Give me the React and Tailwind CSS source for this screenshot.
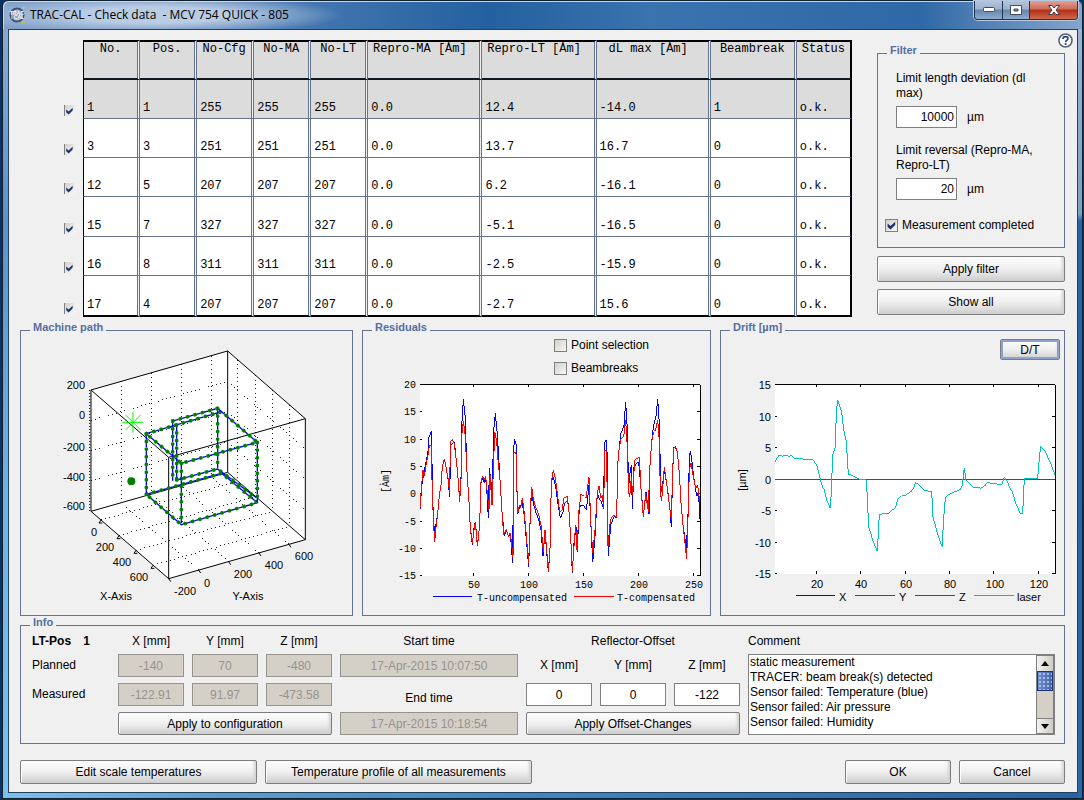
import React from "react";

const columns = [
  { name: "No.", width: 57 },
  { name: "Pos.", width: 57 },
  { name: "No-Cfg", width: 57 },
  { name: "No-MA", width: 57 },
  { name: "No-LT", width: 57 },
  { name: "Repro-MA [Àm]", width: 114, wide: true },
  { name: "Repro-LT [Àm]", width: 114, wide: true },
  { name: "dL max [Àm]", width: 114, wide: true },
  { name: "Beambreak", width: 86 },
  { name: "Status", width: 55 },
];

const rows = [
  ["1", "1", "255", "255", "255", "0.0", "12.4", "-14.0", "1", "o.k."],
  ["3", "3", "251", "251", "251", "0.0", "13.7", "16.7", "0", "o.k."],
  ["12", "5", "207", "207", "207", "0.0", "6.2", "-16.1", "0", "o.k."],
  ["15", "7", "327", "327", "327", "0.0", "-5.1", "-16.5", "0", "o.k."],
  ["16", "8", "311", "311", "311", "0.0", "-2.5", "-15.9", "0", "o.k."],
  ["17", "4", "207", "207", "207", "0.0", "-2.7", "15.6", "0", "o.k."],
];

function Button({ className = "", children }) {
  return (
    <button
      type="button"
      className={
        "rounded-xs border border-[#7d7d7d] bg-[linear-gradient(to_bottom,#fdfdfd,#f1f1f1_45%,#e6e6e6_65%,#cdcdcd)] text-center text-xs text-black shadow-[inset_-3px_0_3px_-1px_#d2d2d2,inset_1px_1px_0_#ffffff] " +
        className
      }
    >
      {children}
    </button>
  );
}

function CheckMark({ className }) {
  return (
    <svg viewBox="0 0 13 13" className={"pointer-events-none [grid-area:1/1] " + className}>
      <path d="M2.6 4.6 L5.5 7 L10.2 2.8 V6 L5.5 10.6 L2.6 8 Z" fill="#1c3476" />
    </svg>
  );
}

function Checkbox({ id, checked }) {
  return (
    <span className="grid size-[13px] shrink-0">
      <input
        id={id}
        type="checkbox"
        defaultChecked={checked}
        className="peer size-[13px] appearance-none border border-[#808080] bg-[linear-gradient(135deg,#d4d0c8,#f8f8f6)] [grid-area:1/1]"
      />
      <CheckMark className="hidden size-[13px] peer-checked:block" />
    </span>
  );
}

function RowCheckbox({ label }) {
  return (
    <span className="grid h-[11px] w-[10px]">
      <input
        type="checkbox"
        defaultChecked
        aria-label={label}
        className="peer h-[11px] w-[10px] appearance-none border-l border-[#808080] bg-[linear-gradient(135deg,#d4d0c8,#f8f8f6)] [grid-area:1/1]"
      />
      <CheckMark className="hidden h-[12px] w-[11px] peer-checked:block" />
    </span>
  );
}

function Panel({ title, children }) {
  return (
    <fieldset className="min-w-0 border border-[#66738e]">
      <legend className="ml-[9px] px-[3px] pb-[6px] text-[11px] leading-[12px] font-bold text-[#566ea2]">
        {title}
      </legend>
      {children}
    </fieldset>
  );
}

function MeasurementTable() {
  return (
    <table className="h-[277px] w-full table-fixed border-separate border-spacing-0 bg-[#f0f0f0] font-['Liberation_Mono',monospace] text-xs leading-[14px]">
      <colgroup>
        <col width={20} />
        {columns.map((c) => (
          <col key={c.name} width={c.width} />
        ))}
      </colgroup>
      <thead>
        <tr className="h-[40px]">
          <td />
          {columns.map((c) => (
            <th
              key={c.name}
              scope="col"
              className={
                "overflow-hidden border-t-2 border-r-3 border-b-2 border-t-black border-r-[#66738e] border-b-[#101820] bg-[#dcdcdc] bg-clip-padding p-0 align-top font-normal whitespace-nowrap [border-right-style:double] first-of-type:border-l first-of-type:border-l-black last:border-r-2 last:border-r-black last:[border-right-style:solid] " +
                (c.wide ? "pr-2" : "")
              }
            >
              {c.name}
            </th>
          ))}
        </tr>
      </thead>
      <tbody>
        {rows.map((row, i) => (
          <tr key={row[0]} className="group">
            <td className="p-0 pb-[3px] pl-px align-bottom">
              <RowCheckbox label={"Use measurement " + row[0]} />
            </td>
            {row.map((value, j) => (
              <td
                key={j}
                className={
                  "border-r-3 border-b border-r-[#66738e] border-b-[#66738e] bg-clip-padding p-0 pb-[3px] pl-[3px] align-bottom [border-right-style:double] nth-2:border-l nth-2:border-l-black last:border-r-2 last:border-r-black last:[border-right-style:solid] group-last:border-b-2 group-last:border-b-black " +
                  (i === 0 ? "bg-[#dcdcdc]" : "bg-white")
                }
              >
                {value}
              </td>
            ))}
          </tr>
        ))}
      </tbody>
    </table>
  );
}

const boxX = [0.13, 0.36, 0.58, 0.8];
const boxY = [0.22, 0.44, 0.66, 0.88];
const boxZ = [91, 182, 273];

const toolPath = [
  "394,341 620,275 727,367 499,430 394,341",
  "394,523 620,460 727,548 499,614 394,523",
  "394,341 394,523",
  "499,430 499,614",
  "727,367 727,548",
  "608,265 608,447",
  "473,303 473,487",
  "485,315 485,480",
  "473,303 608,265 620,275",
  "485,480 608,447 727,535",
];

function MachinePath() {
  const grid = [];
  boxY.forEach((t) => {
    const dx = 410 * t;
    const dy = -117 * t;
    grid.push([228 + dx, 210 + dy, 228 + dx, 574 + dy]);
    grid.push([461 + dx, 776 + dy, 228 + dx, 574 + dy]);
  });
  boxX.forEach((t) => {
    const dx = 233 * t;
    const dy = 202 * t;
    grid.push([638 + dx, 93 + dy, 638 + dx, 457 + dy]);
    grid.push([228 + dx, 574 + dy, 638 + dx, 457 + dy]);
  });
  boxZ.forEach((z) => {
    grid.push([228, 210 + z, 638, 93 + z]);
    grid.push([638, 93 + z, 871, 296 + z]);
  });
  return (
    <svg
      viewBox="21 339 331 276"
      className="block h-auto w-full font-['Liberation_Sans',Arial,sans-serif] text-[11px]"
      role="img"
      aria-label="Machine path"
    >
      <g transform="translate(15 320) scale(0.33333)" fill="none" strokeWidth="3">
        <path d="M228 210 L638 93 L871 296 V659 L461 776 L228 574 Z" fill="#fff" />
        <g stroke="#222" strokeDasharray="3 10" shapeRendering="crispEdges">
          {grid.map(([x1, y1, x2, y2], i) => (
            <line key={i} x1={x1} y1={y1} x2={x2} y2={y2} />
          ))}
        </g>
        <path
          d="M228 210 L638 93 L871 296 L461 412 Z M228 574 L638 457 L871 659 L461 776 Z M228 210 V574 M638 93 V457 M871 296 V659 M461 412 V776"
          stroke="#000"
        />
        <path
          d="M258 600 l-6 9 h10 M312 647 l-6 9 h10 M363 691 l-6 9 h10 M414 736 l-6 9 h10 M461 776 l6 9 M551 750 l6 9 M641 725 l6 9 M732 699 l6 9 M822 673 l6 9"
          stroke="#000"
        />
        <path d="M224 210 V574" stroke="#000" strokeDasharray="3 6" />
        {toolPath.map((p) => (
          <React.Fragment key={p}>
            <polyline points={p} stroke="#0000ff" strokeWidth="4" strokeDasharray="13 10" strokeDashoffset="-5" />
            <polyline points={p} stroke="#007f00" strokeWidth="11" strokeLinecap="round" strokeDasharray="1 22" />
          </React.Fragment>
        ))}
        <path d="M322 307 H384 M354 276 V338 M332 285 L377 330 M377 285 L332 330" stroke="#00ff00" />
        <circle cx="349" cy="484" r="12" fill="#007f00" />
      </g>
      <g textAnchor="end">
        <text x="85" y="389">200</text>
        <text x="85" y="419">0</text>
        <text x="85" y="451">-200</text>
        <text x="85" y="481">-400</text>
        <text x="85" y="510">-600</text>
      </g>
      <g textAnchor="middle">
        <text x="94" y="536">0</text>
        <text x="105" y="551">200</text>
        <text x="122" y="566">400</text>
        <text x="139" y="581">600</text>
        <text x="185" y="595">-200</text>
        <text x="207" y="587">0</text>
        <text x="243" y="578">200</text>
        <text x="274" y="569">400</text>
        <text x="304" y="560">600</text>
        <text x="116" y="600">X-Axis</text>
        <text x="248" y="600">Y-Axis</text>
      </g>
    </svg>
  );
}

const uncompensated =
  "150,418 155,350 162,305 168,275 174,245 176,205 184,184 187,330 190,450 194,485 199,455 203,432 208,375 213,345 217,290 223,267 228,290 234,325 239,382 242,225 247,222 253,215 258,265 263,310 269,390 273,325 276,155 280,88 286,145 290,290 297,395 301,475 307,524 312,475 316,455 322,520 326,500 330,430 333,340 338,322 343,338 347,325 352,385 355,445 358,295 362,330 364,370 368,300 372,170 376,130 382,195 390,330 396,425 403,498 409,478 415,500 421,492 428,580 431,245 433,208 438,220 440,330 443,433 449,408 457,400 463,440 470,520 476,590 482,400 486,375 490,400 497,425 505,445 513,480 519,558 525,490 530,545 535,607 540,535 544,335 550,320 557,350 562,390 571,445 579,425 583,403 593,390 597,425 602,500 607,610 612,520 618,470 622,545 626,440 631,405 641,408 649,420 653,385 657,345 662,450 668,577 675,500 682,370 688,385 695,398 701,418 703,220 708,210 711,240 713,470 715,557 722,465 732,440 740,443 743,285 748,230 753,190 762,165 767,97 771,160 776,350 780,310 784,285 787,418 792,290 806,275 813,355 820,437 828,366 837,433 840,285 845,215 850,170 858,140 863,88 868,160 872,340 875,365 883,300 893,360 900,420 904,470 908,300 912,232 918,235 922,245 928,310 933,400 939,465 944,500 949,538 955,410 958,260 961,244 964,260 971,320 980,378 986,370 989,448";

const compensated =
  "150,412 155,345 159,300 163,318 168,285 173,262 178,228 184,226 186,330 190,450 194,517 199,460 203,432 208,375 213,345 217,290 223,267 228,290 234,325 239,368 241,215 247,208 253,222 258,265 263,310 269,395 273,330 276,190 280,152 286,200 290,290 297,395 301,475 307,520 312,480 316,455 322,528 326,500 330,430 333,335 338,318 343,330 347,318 352,370 357,420 360,315 366,405 370,300 374,185 380,215 384,270 390,330 396,425 401,495 409,478 415,500 421,488 429,560 432,245 438,250 440,330 443,430 448,405 452,415 457,385 463,430 470,510 476,580 482,400 485,350 489,380 496,410 505,430 513,465 520,545 525,480 530,540 535,605 540,535 544,335 550,300 557,330 562,370 569,425 577,420 581,385 591,378 597,425 602,500 607,603 612,530 617,465 621,540 627,420 633,372 643,380 648,385 657,322 662,450 668,550 675,480 682,370 687,348 692,385 697,375 701,415 704,240 710,245 712,420 714,528 721,450 730,435 740,440 743,285 748,230 753,208 761,200 767,150 771,215 776,370 779,380 784,320 788,375 794,270 808,262 813,355 820,442 827,370 835,425 839,300 845,215 851,185 857,180 863,150 868,215 871,370 875,392 883,292 890,340 895,380 904,450 908,300 911,237 916,228 922,245 928,310 933,400 939,465 945,520 950,568 955,410 958,300 963,280 970,320 977,355 983,345 989,395";

function Residuals() {
  const yTicks = [20, 15, 10, 5, 0, -5, -10, -15];
  const xTicks = [50, 100, 150, 200, 250];
  return (
    <svg
      viewBox="363 376 347 238"
      className="block h-auto w-full font-['Liberation_Mono',monospace] text-[10px]"
      role="img"
      aria-label="Residuals"
    >
      <g transform="translate(370 370) scale(0.33333)" fill="none" strokeWidth="3">
        <rect x="150" y="43" width="841" height="575" fill="#fff" />
        <path d="M150 44 H991 V619" stroke="#000" shapeRendering="crispEdges" />
        {yTicks.map((v, i) => (
          <path key={v} d={`M150 ${44 + i * 82} h6 M991 ${44 + i * 82} h-9`} stroke="#000" shapeRendering="crispEdges" />
        ))}
        {xTicks.map((v, i) => (
          <path key={v} d={`M${310 + i * 165} 618 v-9 M${310 + i * 165} 44 v8`} stroke="#000" shapeRendering="crispEdges" />
        ))}
        <polyline points={uncompensated} stroke="#0000ff" shapeRendering="crispEdges" />
        <polyline points={compensated} stroke="#ff0000" shapeRendering="crispEdges" />
        <path d="M189 680 H306" stroke="#0000ff" shapeRendering="crispEdges" />
        <path d="M612 680 H732" stroke="#ff0000" shapeRendering="crispEdges" />
      </g>
      <g textAnchor="end">
        {yTicks.map((v, i) => (
          <text key={v} x="416" y={Math.round(388 + i * 27.3)}>{v}</text>
        ))}
      </g>
      <g textAnchor="middle">
        {xTicks.map((v, i) => (
          <text key={v} x={474 + i * 55} y="588">{v}</text>
        ))}
        <text transform="translate(389 481) rotate(-90)">[Àm]</text>
      </g>
      <text x="477" y="601">T-uncompensated</text>
      <text x="617" y="601">T-compensated</text>
    </svg>
  );
}

const laser =
  "150,412 155,400 163,390 172,394 183,390 192,394 200,391 208,401 235,401 237,404 264,404 275,420 285,460 292,485 298,495 305,525 316,550 319,500 323,390 331,365 334,260 338,226 350,260 356,315 364,350 370,447 385,453 403,463 424,464 427,520 431,605 443,645 457,679 463,568 490,565 511,548 519,523 530,512 543,510 558,500 566,488 572,472 582,480 600,497 620,499 624,575 637,625 652,667 655,590 661,520 668,511 690,500 706,494 713,480 715,445 718,430 723,465 745,488 757,486 767,490 782,480 788,471 800,476 831,478 838,457 847,470 855,490 862,500 874,540 887,567 893,565 898,461 938,461 943,400 947,364 958,375 975,410 990,450";

function Drift() {
  const yTicks = [15, 10, 5, 0, -5, -10, -15];
  const xTicks = [20, 40, 60, 80, 100, 120];
  return (
    <svg
      viewBox="721 360 343 254"
      className="block h-auto w-full font-['Liberation_Sans',Arial,sans-serif] text-[11px]"
      role="img"
      aria-label="Drift"
    >
      <g transform="translate(725 325) scale(0.33333)" fill="none" strokeWidth="3">
        <rect x="150" y="179" width="841" height="568" fill="#fff" />
        <g stroke="#000" shapeRendering="crispEdges">
          <path d="M150 179 H991 V747" />
          {yTicks.map((v, i) => (
            <path key={v} d={`M150 ${180 + i * 94.5} h6 M991 ${180 + i * 94.5} h-9`} />
          ))}
          {xTicks.map((v, i) => (
            <path key={v} d={`M${274 + i * 133.2} 747 v-9 M${274 + i * 133.2} 180 v7`} />
          ))}
        </g>
        <path d="M150 464 H991" stroke="#ff0000" shapeRendering="crispEdges" />
        <polyline points={laser} stroke="#00bfbf" shapeRendering="crispEdges" />
        <g shapeRendering="crispEdges">
          <path d="M213 812 H330" stroke="#0000ff" />
          <path d="M390 812 H510" stroke="#007f00" />
          <path d="M570 812 H690" stroke="#ff0000" />
          <path d="M747 812 H866" stroke="#00bfbf" />
        </g>
      </g>
      <g textAnchor="end">
        {yTicks.map((v, i) => (
          <text key={v} x="771" y={Math.round(389 + i * 31.5)}>{v}</text>
        ))}
      </g>
      <g textAnchor="middle">
        {xTicks.map((v, i) => (
          <text key={v} x={Math.round(817 + i * 44.4)} y="588">{v}</text>
        ))}
        <text transform="translate(746 480) rotate(-90)">[µm]</text>
      </g>
      <text x="839" y="601">X</text>
      <text x="899" y="601">Y</text>
      <text x="959" y="601">Z</text>
      <text x="1017" y="601">laser</text>
    </svg>
  );
}

function ReadOnly({ label, value }) {
  return (
    <input
      disabled
      aria-label={label}
      defaultValue={value}
      className="w-full min-w-0 border border-[#96938d] bg-[#d4d0c8] text-center text-xs text-[#96938d]"
    />
  );
}

function Offset({ label, value }) {
  return (
    <input
      aria-label={label}
      defaultValue={value}
      className="w-full min-w-0 border border-[#808080] bg-white text-center text-xs"
    />
  );
}

const comments = `static measurement
TRACER: beam break(s) detected
Sensor failed: Temperature (blue)
Sensor failed: Air pressure
Sensor failed: Humidity`;

function Info() {
  return (
    <Panel title="Info">
      <div className="grid grid-cols-[78fr_66fr_66fr_66fr_178fr_66fr_66fr_66fr_307fr] grid-rows-[14px_23px_23px_23px] gap-x-2 gap-y-[6px] pr-[9px] pb-2 pl-[11px] text-center text-xs leading-[15px]">
        <div className="flex gap-3 text-left font-bold whitespace-nowrap">
          <span>LT-Pos</span>
          <span>1</span>
        </div>
        <span>X [mm]</span>
        <span>Y [mm]</span>
        <span>Z [mm]</span>
        <span>Start time</span>
        <span className="col-span-3">Reflector-Offset</span>
        <label htmlFor="comment" className="text-left">Comment</label>

        <span className="self-center text-left">Planned</span>
        <ReadOnly label="Planned X" value="-140" />
        <ReadOnly label="Planned Y" value="70" />
        <ReadOnly label="Planned Z" value="-480" />
        <ReadOnly label="Start time" value="17-Apr-2015 10:07:50" />
        <span className="self-center">X [mm]</span>
        <span className="self-center">Y [mm]</span>
        <span className="self-center">Z [mm]</span>
        <div className="row-span-3 flex border border-[#808080] bg-white">
          <textarea
            id="comment"
            defaultValue={comments}
            className="min-w-0 flex-1 resize-none overflow-hidden px-px text-left text-xs leading-[15px]"
          />
          <div className="m-px flex w-4 flex-col bg-[#d4d0c8] outline outline-[#808080]">
            <button type="button" aria-label="Scroll up" className="grid h-[15px] place-items-center bg-[linear-gradient(90deg,#f4f3f0,#cfccc4)]">
              <svg viewBox="0 0 8 5" className="h-[5px] w-2"><path d="M4 0 L8 5 H0 Z" /></svg>
            </button>
            <div className="h-5 border border-[#1c3476] bg-[radial-gradient(#a8bde6_1px,transparent_1px),linear-gradient(90deg,#6f8fce,#4464a8)] [background-size:4px_4px,100%_100%]" />
            <div className="flex-1" />
            <button type="button" aria-label="Scroll down" className="grid h-[15px] place-items-center border-t border-[#808080] bg-[linear-gradient(90deg,#f4f3f0,#cfccc4)]">
              <svg viewBox="0 0 8 5" className="h-[5px] w-2"><path d="M4 5 L8 0 H0 Z" /></svg>
            </button>
          </div>
        </div>

        <span className="self-center text-left">Measured</span>
        <ReadOnly label="Measured X" value="-122.91" />
        <ReadOnly label="Measured Y" value="91.97" />
        <ReadOnly label="Measured Z" value="-473.58" />
        <span className="self-end">End time</span>
        <Offset label="Offset X" value="0" />
        <Offset label="Offset Y" value="0" />
        <Offset label="Offset Z" value="-122" />

        <Button className="col-span-3 col-start-2">Apply to configuration</Button>
        <ReadOnly label="End time" value="17-Apr-2015 10:18:54" />
        <Button className="col-span-3">Apply Offset-Changes</Button>
      </div>
    </Panel>
  );
}

function TitleBar() {
  return (
    <header className="flex h-7 items-start justify-between pr-1 pl-[6px]">
      <div className="flex h-7 items-center gap-[5px]">
        <svg viewBox="0 0 16 16" className="size-4">
          <circle cx="8" cy="8" r="6.5" fill="#b9c4d6" stroke="#3d5176" strokeWidth="2" />
          <rect x="2" y="4" width="12" height="8" fill="#8f9fb9" />
          <text x="8" y="8" fontSize="5" fontWeight="bold" fill="#fff" textAnchor="middle" fontFamily="Liberation Sans">TRAC</text>
          <text x="10" y="12" fontSize="5" fontWeight="bold" fill="#fff" textAnchor="middle" fontFamily="Liberation Sans">CAL</text>
          <path d="M13 0 h3 l-1 2 z M13 16 h3 l-1 -2 z" fill="#e8c63c" />
        </svg>
        <h1 className="font-['Open_Sans','Noto_Sans',sans-serif] text-xs whitespace-pre text-black">
          {"TRAC-CAL - Check data  - MCV 754 QUICK - 805"}
        </h1>
      </div>
      <div className="flex h-[19px] overflow-hidden rounded-b-[4px] border border-t-0 border-[#24344f] shadow-[0_0_0_1px_#b4c8e2]">
        <button type="button" aria-label="Minimize" className="grid w-7 place-items-center border-r border-[#24344f] bg-[linear-gradient(#b4c4da,#9db2cf_45%,#6685ac_50%,#8fabcd)]">
          <svg viewBox="0 0 12 6" className="h-[6px] w-3"><rect x="0.5" y="0.5" width="11" height="4" rx="1" fill="#fff" stroke="#3d4a60" /></svg>
        </button>
        <button type="button" aria-label="Maximize" className="grid w-[27px] place-items-center border-r border-[#24344f] bg-[linear-gradient(#b4c4da,#9db2cf_45%,#6685ac_50%,#8fabcd)]">
          <svg viewBox="0 0 12 10" className="h-[10px] w-3"><path d="M0.5 0.5 h11 v9 h-11 z M4 4 h4 v2 h-4 z" fill="#fff" fillRule="evenodd" stroke="#3d4a60" /></svg>
        </button>
        <button type="button" aria-label="Close" className="grid w-[47px] place-items-center bg-[linear-gradient(#e0a193,#cf6a58_45%,#b02e17_50%,#cf6a4c)]">
          <svg viewBox="0 0 12 10" className="h-[10px] w-3">
            <path d="M0.5 0.5 H4 L6 3 L8 0.5 H11.5 L8 5 L11.5 9.5 H8 L6 7 L4 9.5 H0.5 L4 5 Z" fill="#fff" stroke="#4a3a45" />
          </svg>
        </button>
      </div>
    </header>
  );
}

export default function App() {
  return (
    <div className="flex min-h-screen flex-col bg-[#0d3166] pr-px pb-px pl-[2px] font-['Liberation_Sans',Arial,sans-serif] text-xs text-black">
      <div className="flex flex-1 flex-col rounded-t-md border border-[#10202f] bg-[radial-gradient(ellipse_190px_20px_at_150px_14px,#b9cce4_40%,transparent_100%),linear-gradient(90deg,#7f9fc8,#4577b0_28%,#24609f_45%,#3a73ae_60%,#2f68a6_85%,#86a5cb)] [background-repeat:no-repeat] [background-size:100%_28px,100%_28px] shadow-[inset_1px_1px_0_#c5d8ec]">
        <TitleBar />
        <div className="flex flex-1 bg-[linear-gradient(#8aa9cf,#5b93c9_25%,#6fb2e4_60%,#7cc0ee),linear-gradient(#9ab4d3,#7f9fc6_24%,#2b62a5_25%,#2b66a8),linear-gradient(90deg,#7cc0ee,#5c9dcb_20%,#3f86bf_50%,#2763a3)] [background-position:left_top,right_top,left_bottom] [background-repeat:no-repeat] [background-size:5px_100%,4px_100%,100%_6px] pr-1 pb-[5px] pl-[5px]">
          <main className="relative min-w-0 flex-1 border border-[#24405f] bg-[#f0f0f0] pt-[10px] pr-3 pb-2 pl-[11px]">
            <button type="button" aria-label="Help" className="absolute top-[3px] right-1 size-[15px]">
              <svg viewBox="0 0 15 15" className="size-[15px]">
                <circle cx="7.5" cy="7.5" r="6.5" fill="#fff" stroke="#566379" strokeWidth="1.6" />
                <path d="M5 6 Q5 3.6 7.5 3.6 Q10 3.6 10 5.6 Q10 6.8 8.6 7.4 Q7.6 7.9 7.6 9.2" fill="none" stroke="#23447c" strokeWidth="1.6" />
                <rect x="6.7" y="10.2" width="1.8" height="1.8" fill="#23447c" />
              </svg>
            </button>

            <section className="flex gap-[25px] pl-[43px]">
              <div className="min-w-0 flex-1">
                <MeasurementTable />
              </div>
              <aside className="w-[188px] shrink-0 pt-1">
                <Panel title="Filter">
                  <div className="pr-6 pb-[15px] pl-[7px]">
                    <div className="pt-[9px] pl-[11px]">
                      <label htmlFor="limit-length" className="block leading-[15px]">Limit length deviation (dl max)</label>
                      <div className="mt-[5px] flex items-center gap-[10px]">
                        <input id="limit-length" defaultValue="10000" className="h-[22px] w-[61px] border border-[#808080] bg-white pr-[2px] text-right" />
                        <span>µm</span>
                      </div>
                      <label htmlFor="limit-reversal" className="mt-[15px] block leading-[15px]">Limit reversal (Repro-MA, Repro-LT)</label>
                      <div className="mt-[5px] flex items-center gap-[10px]">
                        <input id="limit-reversal" defaultValue="20" className="h-[22px] w-[61px] border border-[#808080] bg-white pr-[2px] text-right" />
                        <span>µm</span>
                      </div>
                    </div>
                    <div className="mt-[19px] flex items-center gap-1 leading-[13px]">
                      <Checkbox id="completed" checked />
                      <label htmlFor="completed" className="whitespace-nowrap">Measurement completed</label>
                    </div>
                  </div>
                </Panel>
                <div className="mt-2 flex flex-col gap-[7px]">
                  <Button className="h-[26px]">Apply filter</Button>
                  <Button className="h-[26px]">Show all</Button>
                </div>
              </aside>
            </section>

            <section className="mt-1 grid grid-cols-[333fr_349fr_345fr] gap-[9px]">
              <Panel title="Machine path">
                <MachinePath />
              </Panel>
              <Panel title="Residuals">
                <div className="ml-auto flex w-[156px] flex-col gap-[10px] pb-[1px] leading-[13px]">
                  <div className="flex items-center gap-1">
                    <Checkbox id="points" />
                    <label htmlFor="points">Point selection</label>
                  </div>
                  <div className="flex items-center gap-1">
                    <Checkbox id="beambreaks" />
                    <label htmlFor="beambreaks">Beambreaks</label>
                  </div>
                </div>
                <Residuals />
              </Panel>
              <Panel title="Drift [µm]">
                <div className="flex justify-end pr-1">
                  <Button className="h-[21px] w-[60px] outline-2 -outline-offset-3 outline-[#8ea3cc]">D/T</Button>
                </div>
                <Drift />
              </Panel>
            </section>

            <Info />

            <footer className="mt-4 flex gap-2">
              <Button className="h-6 w-[237px]">Edit scale temperatures</Button>
              <Button className="h-6 w-[267px]">Temperature profile of all measurements</Button>
              <Button className="ml-auto h-6 w-[106px]">OK</Button>
              <Button className="h-6 w-[106px]">Cancel</Button>
            </footer>
          </main>
        </div>
      </div>
    </div>
  );
}
